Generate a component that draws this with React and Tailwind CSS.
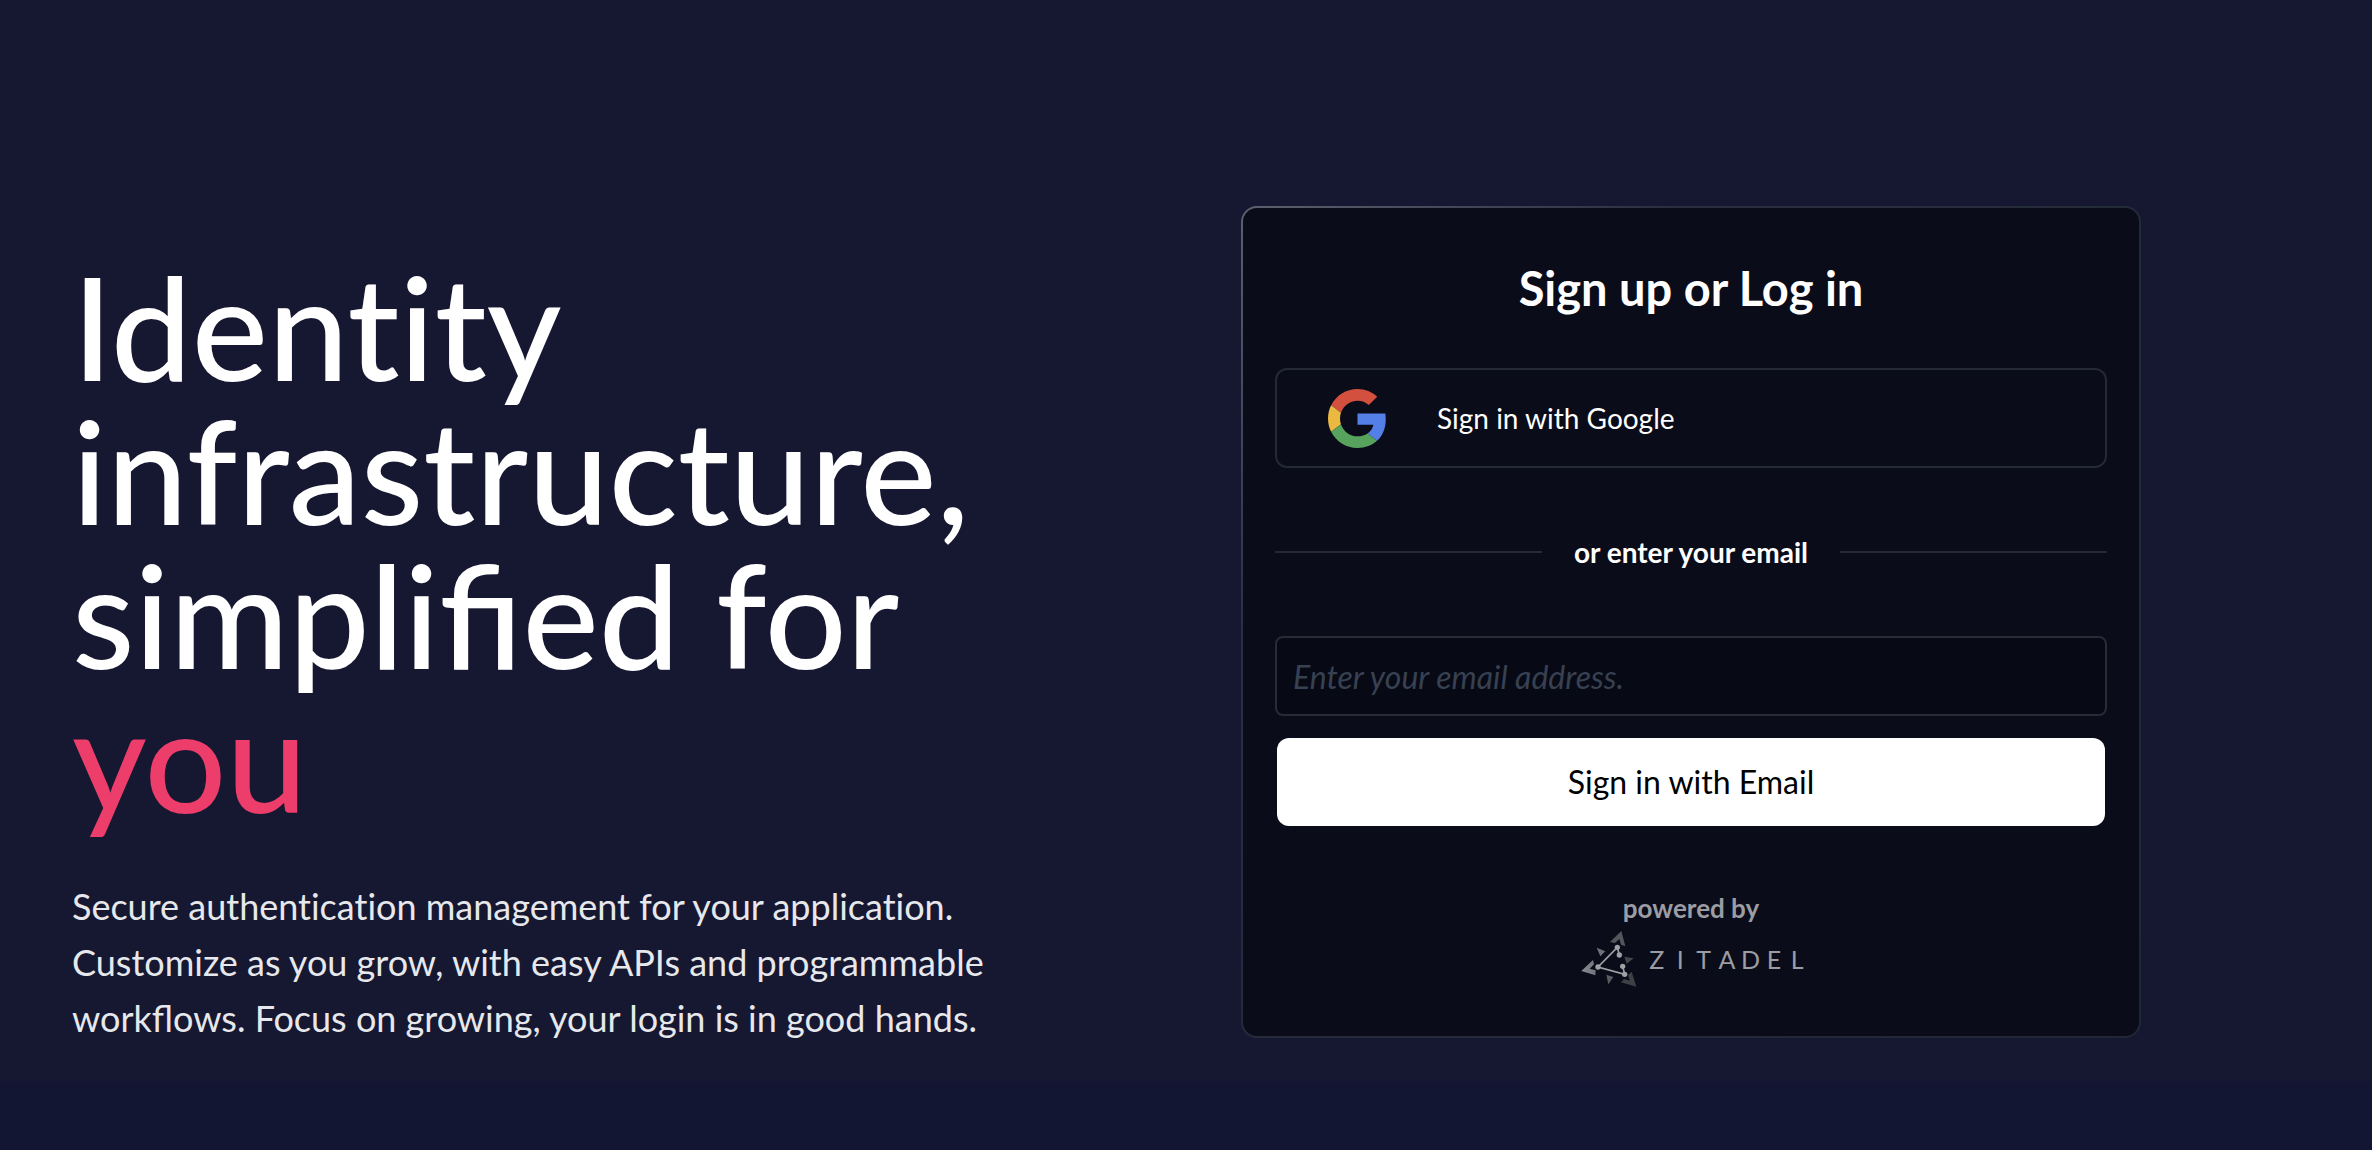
function GoogleLogo({ className }) {
  return (
    <svg viewBox="0 0 48 48" className={className} aria-hidden="true">
      <path fill="#d3503e" d="M24 9.5c3.54 0 6.71 1.22 9.21 3.6l6.85-6.85C35.9 2.38 30.47 0 24 0 14.62 0 6.51 5.38 2.56 13.22l7.98 6.19C12.43 13.72 17.74 9.5 24 9.5z" />
      <path fill="#537fe7" d="M46.98 24.55c0-1.57-.15-3.09-.38-4.55H24v9.02h12.94c-.58 2.96-2.26 5.48-4.78 7.18l7.73 6c4.51-4.18 7.09-10.36 7.09-17.65z" />
      <path fill="#ebb940" d="M10.53 28.59c-.48-1.45-.76-2.99-.76-4.59s.27-3.14.76-4.59l-7.98-6.19C.92 16.46 0 20.12 0 24c0 3.88.92 7.54 2.56 10.78l7.97-6.19z" />
      <path fill="#57a25c" d="M24 48c6.48 0 11.93-2.13 15.89-5.81l-7.73-6c-2.15 1.45-4.92 2.3-8.16 2.3-6.26 0-11.57-4.22-13.47-9.91l-7.98 6.19C6.51 42.62 14.62 48 24 48z" />
    </svg>
  );
}

function ZitadelMark({ className }) {
  return (
    <svg viewBox="0 0 168 174" className={className} aria-hidden="true">
      <defs>
        <linearGradient id="mark-left" x1="0" y1="0" x2="1" y2="0">
          <stop offset="0" stopColor="#8b8b92" />
          <stop offset="1" stopColor="#74747b" />
        </linearGradient>
      </defs>
      <path fill="#55565b" d="M121 3 L133 49 L120 44 L115 27 L102 39 L87 36 Z" />
      <path fill="#3f4046" d="M166 170 L120 157 L129 147 L147 152 L141 136 L152 125 Z" />
      <path fill="url(#mark-left)" d="M1 123 L36 90 L39 103 L26 116 L44 121 L43 136 Z" />
      <path fill="#707178" d="M47 53 L73 64 L58 79 Z" />
      <path fill="#46474d" d="M130 80 L158 85 L137 101 Z" />
      <path fill="#5b5c62" d="M76 134 L97 141 L82 163 Z" />
      <path fill="none" stroke="#a0a0a7" strokeWidth="5" d="M115 75 L109 52 L51 111 L131 133 L125 109" />
      <g fill="#a0a0a7">
        <circle cx="109" cy="52" r="8" />
        <circle cx="115" cy="75" r="8" />
        <circle cx="51" cy="111" r="8" />
        <circle cx="125" cy="109" r="8" />
        <circle cx="131" cy="133" r="8" />
      </g>
    </svg>
  );
}

export default function App() {
  return (
    <main className="min-h-screen bg-linear-to-b from-[#161731] from-94% to-[#131632] to-94% font-['Lato',sans-serif] text-white">
      <div className="grid grid-cols-2 items-start">
        <section className="pt-[254px] pl-[72px]">
          <h1 className="max-w-[960px] text-[144px] leading-[144px] font-medium">
            <span className="[font-variant-ligatures:none]">Identity</span> infrastructure, simplified for{" "}
            <span className="text-[#ec3d6b]">you</span>
          </h1>
          <p className="mt-12 max-w-[940px] text-[36px] leading-[56px] text-[#e6e8ec]">
            <span className="[font-variant-ligatures:none]">Secure authentication management for your application.</span>{" "}
            Customize as you grow, with easy APIs and programmable workflows. Focus on growing, your login is in good hands.
          </p>
        </section>

        <section className="mt-[206px] ml-[55px] max-w-[900px] rounded-2xl bg-[radial-gradient(circle_at_top_left,#5c6170,#2a2f3f_35%,#1f2733_100%)] p-[2px]">
          <form className="rounded-[14px] bg-[#0a0c1a] px-8 pt-12 pb-12">
            <h2 className="text-center text-[47px] leading-[64px] font-bold">Sign up or Log in</h2>
            <button type="button" className="mt-12 flex h-[100px] w-full items-center rounded-xl border-2 border-[#252836] px-[51px] text-[28px]">
              <GoogleLogo className="mr-[50px] size-[59px]" />
              Sign in with Google
            </button>
            <div className="mt-16 flex items-center gap-8 text-[28px] leading-10 font-bold">
              <span className="h-[2px] flex-1 bg-[#252836]" />
              or enter your email
              <span className="h-[2px] flex-1 bg-[#252836]" />
            </div>
            <input
              type="email"
              aria-label="Email address"
              placeholder="Enter your email address."
              className="mt-16 block h-20 w-full rounded-lg border-2 border-[#292b36] bg-[#070915] px-4 text-[32px] text-white outline-none placeholder:text-[#374151] placeholder:italic"
            />
            <button type="submit" className="mt-5 block h-[92px] w-full rounded-[14px] border-2 border-transparent bg-white bg-clip-padding text-[32px] text-black">
              Sign in with Email
            </button>
            <div className="mt-16 flex flex-col items-center text-[#9c9ca3]">
              <p className="text-[26px] leading-8 font-bold">powered by</p>
              <div className="mt-[6px] flex items-center gap-2 pl-2">
                <ZitadelMark className="h-[58px] w-14" />
                <div className="grid w-[164px] grid-cols-7 text-center text-[25px] leading-8" aria-label="ZITADEL">
                  <span>Z</span><span>I</span><span>T</span><span>A</span><span>D</span><span>E</span><span>L</span>
                </div>
              </div>
            </div>
          </form>
        </section>
      </div>
    </main>
  );
}
